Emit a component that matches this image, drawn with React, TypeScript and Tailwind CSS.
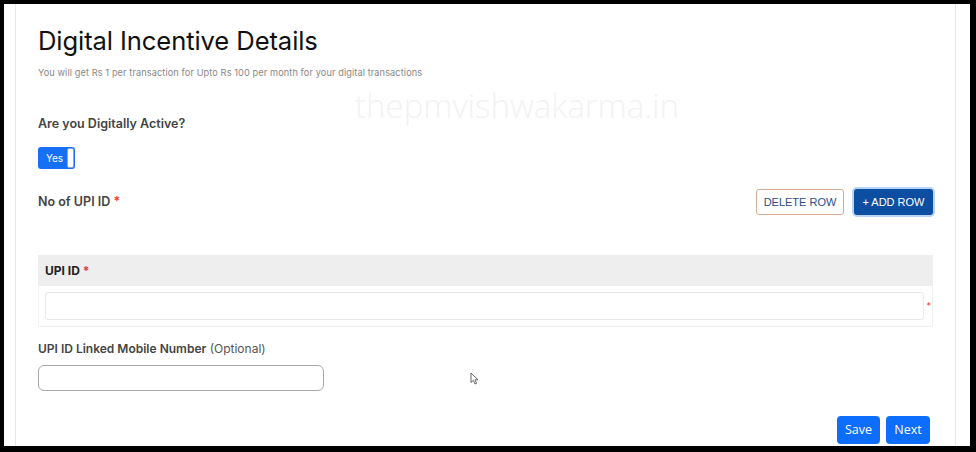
import { useState } from "react";

const heading = { fontFamily: "Inter, 'Open Sans', sans-serif" };
const plain = { fontFamily: "'Liberation Sans', Arial, sans-serif" };
const bs = { fontFamily: "'Open Sans', 'Noto Sans', sans-serif" };

function Cursor() {
  return (
    <svg className="absolute left-[466px] top-[368px] h-[13px] w-[9px]" viewBox="0 0 9 13">
      <path d="M1 1 L1 10.5 L3.4 8.4 L5 12 L6.6 11.3 L5 7.8 L8 7.8 Z" fill="#fff" stroke="#555" strokeWidth="0.9" strokeLinejoin="round" />
    </svg>
  );
}

export default function App() {
  const [upiId, setUpiId] = useState("");
  const [mobile, setMobile] = useState("");

  return (
    <div className="h-[452px] w-[976px] bg-black pb-[6px] pl-[4px] pr-[6px] pt-[4px]">
      <div className="relative h-full w-full overflow-hidden bg-white">
        <div className="ml-[11px] mr-[14px] h-full border-x border-[#e6e6e6] px-[22px] pt-[21px]" style={heading}>
          <h1 className="text-[25.6px] leading-[32px] font-normal tracking-[-0.1px] text-[#111]">
            Digital Incentive Details
          </h1>
          <p className="mt-[10px] text-[9.2px] leading-[12px] tracking-[0.1px] text-[#888]">
            You will get Rs 1 per transaction for Upto Rs 100 per month for your digital transactions
          </p>

          <p className="mt-[37px] text-[12.5px] leading-[16px] font-semibold text-[#444]">Are you Digitally Active?</p>

          <div className="mt-[15px] flex h-[22px] w-[37px] items-center justify-between rounded-[3px] bg-[#1570f6] pl-[8px] pr-[1px]">
            <span className="text-[10px] text-white">Yes</span>
            <span className="h-[20px] w-[7px] rounded-[2px] border border-[#7aa6f5] bg-white" />
          </div>

          <div className="mt-[20px] flex h-[26px] items-center justify-between">
            <p className="text-[12.5px] font-semibold text-[#444]">
              No of UPI ID <span className="text-[#e53935]">*</span>
            </p>
            <div className="flex gap-[10px]" style={plain}>
              <button className="h-[26px] w-[88px] rounded-[3px] border border-[#d8ab93] bg-white text-[11px] text-[#2c4d86]">
                DELETE ROW
              </button>
              <button className="h-[26px] w-[79px] rounded-[3px] bg-[#0c4ea2] text-[11px] text-white shadow-[0_0_0_2px_#b9d3fb]">
                + ADD ROW
              </button>
            </div>
          </div>

          <div className="mt-[40px]">
            <div className="flex h-[31px] items-center bg-[#eeeeee] px-[7px]">
              <span className="text-[12px] font-bold text-[#222]">
                UPI ID <span className="text-[#e53935]">*</span>
              </span>
            </div>
            <div className="flex h-[41px] items-center gap-[2px] border-x border-b border-[#f1f1f1] pl-[6px] pr-[1px]">
              <input
                value={upiId}
                onChange={(e) => setUpiId(e.target.value)}
                className="h-[28px] flex-1 rounded-[3px] border border-[#e8e8e8] bg-white outline-none"
              />
              <span className="text-[9px] text-[#e53935]">*</span>
            </div>
          </div>

          <p className="mt-[14px] text-[12px] leading-[16px] text-[#444]">
            <span className="font-semibold">UPI ID Linked Mobile Number</span>{" "}
            <span className="text-[#555]">(Optional)</span>
          </p>
          <input
            value={mobile}
            onChange={(e) => setMobile(e.target.value)}
            className="mt-[8px] block h-[26px] w-[286px] rounded-[6px] border border-[#a8a8a8] bg-white outline-none"
          />

          <div className="mt-[25px] flex justify-end gap-[6px] pr-[3px]" style={bs}>
            <button className="h-[28px] w-[43px] rounded-[4px] bg-[#0d6efd] text-[12.5px] text-white">Save</button>
            <button className="h-[28px] w-[44px] rounded-[4px] bg-[#0d6efd] text-[12.5px] text-white">Next</button>
          </div>
        </div>

        <span
          className="pointer-events-none absolute left-[351px] top-[77px] text-[33px] font-light text-[#f2f2f2]"
          style={bs}
        >
          thepmvishwakarma.in
        </span>
        <Cursor />
      </div>
    </div>
  );
}
